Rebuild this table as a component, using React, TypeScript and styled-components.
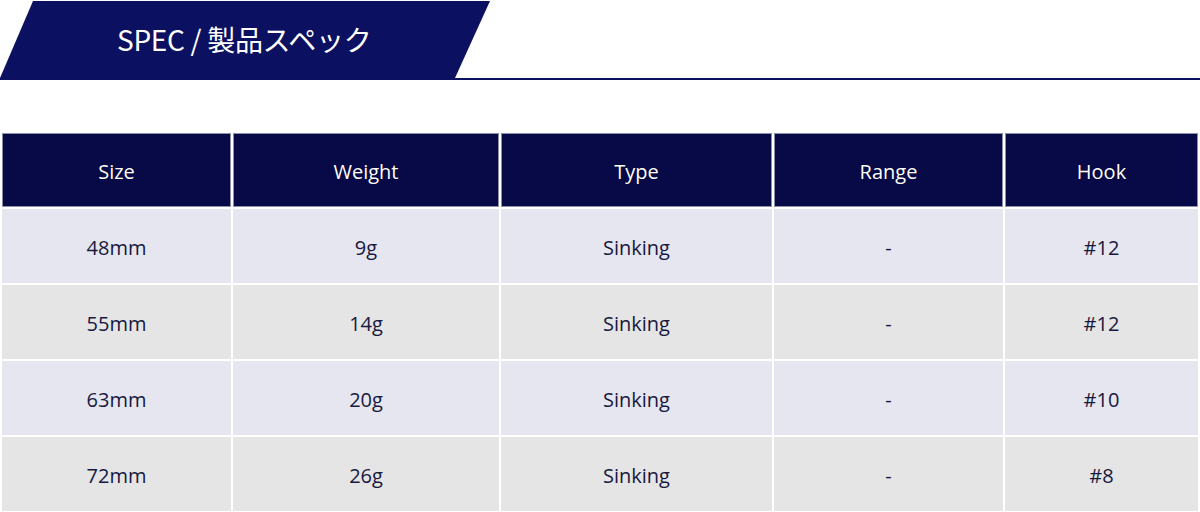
import React from "react";
import styled, { createGlobalStyle } from "styled-components";

const GlobalStyle = createGlobalStyle`
  body {
    margin: 0;
    background: #fff;
    font-family: "Open Sans", "Noto Sans", "Noto Sans CJK JP", sans-serif;
  }
`;

const rows = [
  { size: "48mm", weight: "9g", type: "Sinking", range: "-", hook: "#12" },
  { size: "55mm", weight: "14g", type: "Sinking", range: "-", hook: "#12" },
  { size: "63mm", weight: "20g", type: "Sinking", range: "-", hook: "#10" },
  { size: "72mm", weight: "26g", type: "Sinking", range: "-", hook: "#8" },
];

const widths = [229, 266, 271, 229, 193];

const App = () => {
  return (
    <>
      <GlobalStyle />
      <S.Page>
        <S.Banner>
          <S.Tab>
            <S.Title>SPEC / 製品スペック</S.Title>
          </S.Tab>
        </S.Banner>
        <S.Table>
          <colgroup>
            {widths.map((w, i) => (
              <col key={i} style={{ width: w }} />
            ))}
          </colgroup>
          <thead>
            <tr>
              <S.Th>Size</S.Th>
              <S.Th>Weight</S.Th>
              <S.Th>Type</S.Th>
              <S.Th>Range</S.Th>
              <S.Th>Hook</S.Th>
            </tr>
          </thead>
          <tbody>
            {rows.map((r, i) => (
              <S.Row key={r.size} $odd={i % 2 === 0}>
                <S.Td>{r.size}</S.Td>
                <S.Td>{r.weight}</S.Td>
                <S.Td>{r.type}</S.Td>
                <S.Td>{r.range}</S.Td>
                <S.Td>{r.hook}</S.Td>
              </S.Row>
            ))}
          </tbody>
        </S.Table>
      </S.Page>
    </>
  );
};

export default App;

const S = {
  Page: styled.div`
    width: 1200px;
    height: 512px;
    overflow: hidden;
    padding-top: 1px;
    box-sizing: border-box;
  `,

  Banner: styled.div`
    height: 77px;
    border-bottom: 2px solid #0b1060;
  `,

  Tab: styled.div`
    width: 490px;
    height: 100%;
    background: #0b1160;
    clip-path: polygon(33px 0, 490px 0, 455px 100%, 0 100%);
    display: flex;
    align-items: center;
    padding-left: 117px;
    box-sizing: border-box;
  `,

  Title: styled.h2`
    margin: 0;
    color: #fff;
    font-family: "Noto Sans CJK JP", sans-serif;
    font-size: 28px;
    font-weight: 400;
    letter-spacing: -0.3px;
    padding-bottom: 2px;
  `,

  Table: styled.table`
    margin-top: 51px;
    width: 1200px;
    table-layout: fixed;
    border-collapse: separate;
    border-spacing: 2px;
    background: #fff;
  `,

  Th: styled.th`
    height: 74px;
    padding: 3px 0 0;
    background: #080a48;
    border: 1px solid #8d8fa8;
    color: #fff;
    font-size: 20px;
    font-weight: 400;
    text-align: center;
    box-sizing: border-box;
    text-shadow: 0 0 1px rgba(0, 0, 0, 0.6);
  `,

  Row: styled.tr<{ $odd: boolean }>`
    background: ${(p) => (p.$odd ? "#e5e6ef" : "#e5e5e5")};
  `,

  Td: styled.td`
    height: 74px;
    padding: 3px 0 0;
    color: #181840;
    font-size: 20px;
    text-align: center;
    box-sizing: border-box;
  `,
};
